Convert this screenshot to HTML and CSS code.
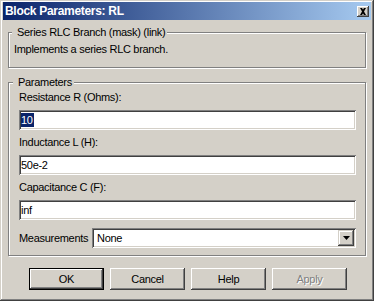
FILE: index.html
```html
<html>
<head>
<meta charset="utf-8">
<title>Block Parameters: RL</title>
<link rel="stylesheet" href="styles.css">
</head>
<body>
<div class='window'>
  <div class='titlebar'>
    <span class='title'>Block Parameters: RL</span>
    <span class='close-btn'>
      <svg width='8' height='7' viewBox='0 0 8 7'>
        <path d='M1 0h2l1 1.5 1-1.5h2l-2 3.5 2 3.5h-2l-1-1.5-1 1.5h-2l2-3.5z' fill='#000'/>
      </svg>
    </span>
  </div>
  <div class='content'>
    <fieldset class='group group-mask'>
      <legend>Series RLC Branch (mask) (link)</legend>
      <p class='desc'>Implements a series RLC branch.</p>
    </fieldset>
    <fieldset class='group group-params'>
      <legend>Parameters</legend>
      <label class='field-label'>Resistance R (Ohms):</label>
      <div class='edit'><span class='sel'>10</span></div>
      <label class='field-label'>Inductance L (H):</label>
      <div class='edit'>50e-2</div>
      <label class='field-label'>Capacitance C (F):</label>
      <div class='edit last'>inf</div>
      <div class='combo-row'>
        <span class='combo-label'>Measurements</span>
        <div class='combo'>
          <span>None</span>
          <span class='drop-btn'>
            <svg width='7' height='4' viewBox='0 0 7 4'><path d='M0 0h7l-3.5 4z' fill='#000'/></svg>
          </span>
        </div>
      </div>
    </fieldset>
    <div class='buttons'>
      <button class='btn default'>OK</button>
      <button class='btn'>Cancel</button>
      <button class='btn'>Help</button>
      <button class='btn disabled'>Apply</button>
    </div>
  </div>
</div>
</body>
</html>
```
FILE: styles.css
```css
html, body {
  margin: 0;
  background: #d4d0c8;
}
body {
  font-family: "Liberation Sans", Arial, sans-serif;
  font-size: 11px;
  letter-spacing: -0.3px;
  color: #000;
}
.window {
  width: 374px;
  height: 301px;
  box-sizing: border-box;
  padding: 2px;
  background: #d4d0c8;
  box-shadow: inset -1px -1px #404040, inset 1px 1px #d4d0c8, inset -2px -2px #808080, inset 2px 2px #fff;
}
.titlebar {
  height: 18px;
  margin: 0 1px;
  padding: 0 2px;
  display: flex;
  align-items: center;
  justify-content: space-between;
  background: linear-gradient(to right, #0a246a, #a6caf0);
  color: #fff;
  font-weight: bold;
  font-size: 12px;
}
.close-btn {
  width: 12px;
  height: 11px;
  display: flex;
  align-items: center;
  justify-content: center;
  background: #d4d0c8;
  box-shadow: inset -1px -1px #404040, inset 1px 1px #fff, inset -2px -2px #808080;
}
.content {
  padding: 0 6px;
}
.group {
  margin: 0;
  min-width: 0;
  border: 1px solid #808080;
  box-shadow: inset 1px 1px #fff, 1px 1px #fff;
}
.group legend {
  line-height: 13px;
  background: #d4d0c8;
}
.group-mask {
  margin-top: 6px;
  padding: 4px 5px 11px 5px;
}
.group-mask legend {
  margin-left: -2px;
  padding: 0 2px 0 5px;
}
.desc {
  margin: 0;
  line-height: 13px;
}
.group-params {
  margin-top: 8px;
  padding: 2px 9px 7px 10px;
}
.group-params legend {
  margin-left: -6px;
  padding: 0 2px 0 5px;
}
.field-label {
  display: block;
  line-height: 13px;
  margin-bottom: 6px;
}
.edit {
  height: 20px;
  box-sizing: border-box;
  margin-bottom: 6px;
  padding: 0 2px;
  display: flex;
  align-items: center;
  background: #fff;
  box-shadow: inset 1px 1px #808080, inset -1px -1px #fff, inset 2px 2px #404040, inset -2px -2px #d4d0c8;
}
.edit.last {
  margin-bottom: 8px;
}
.sel {
  background: #0a246a;
  color: #fff;
  line-height: 14px;
  padding-right: 1px;
}
.combo-row {
  display: flex;
  align-items: center;
}
.combo-label {
  width: 73px;
  flex: none;
}
.combo {
  flex: 1;
  height: 20px;
  box-sizing: border-box;
  padding: 0 2px 0 5px;
  display: flex;
  align-items: center;
  justify-content: space-between;
  background: #fff;
  box-shadow: inset 1px 1px #808080, inset -1px -1px #fff, inset 2px 2px #404040, inset -2px -2px #d4d0c8;
}
.drop-btn {
  width: 16px;
  height: 16px;
  display: flex;
  align-items: center;
  justify-content: center;
  background: #d4d0c8;
  box-shadow: inset -1px -1px #404040, inset 1px 1px #d4d0c8, inset -2px -2px #808080, inset 2px 2px #fff;
}
.buttons {
  margin-top: 12px;
  padding-left: 2px;
  display: flex;
  justify-content: center;
  gap: 6px;
}
.btn {
  width: 75px;
  height: 22px;
  padding: 0;
  border: 0;
  font: inherit;
  letter-spacing: inherit;
  color: #000;
  background: #d4d0c8;
  box-shadow: inset -1px -1px #404040, inset 1px 1px #fff, inset -2px -2px #808080, inset 2px 2px #d4d0c8;
}
.btn.default {
  box-shadow: inset 0 0 0 1px #000, inset -2px -2px #404040, inset 2px 2px #fff, inset -3px -3px #808080;
}
.btn.disabled {
  color: #808080;
  text-shadow: 1px 1px #fff;
}
```
